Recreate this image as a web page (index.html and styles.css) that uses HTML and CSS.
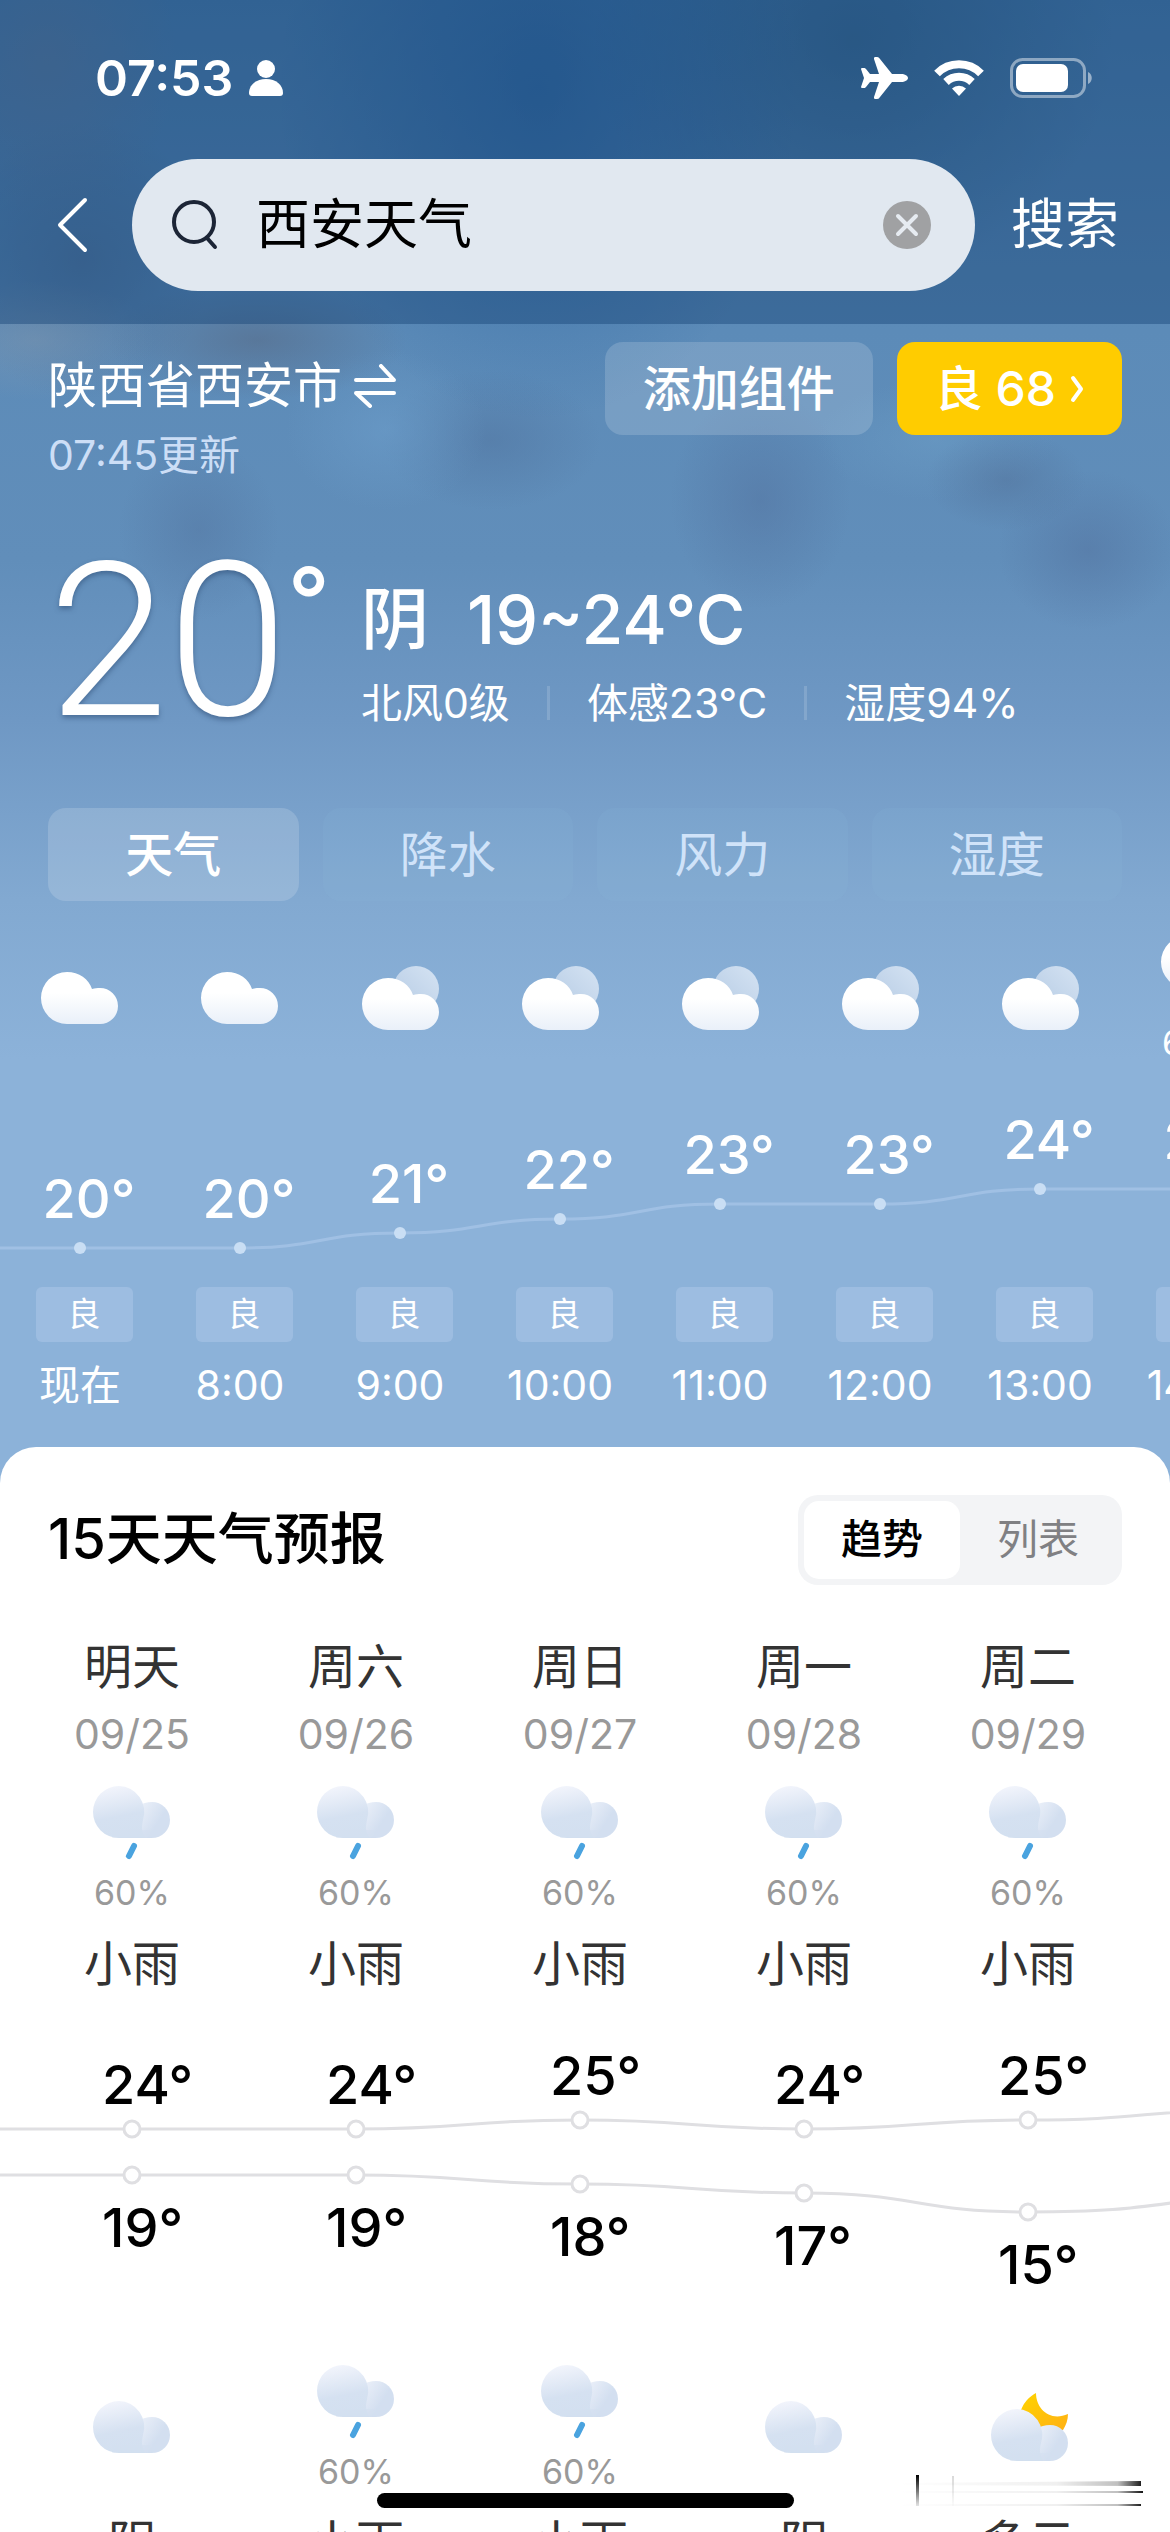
FILE: index.html
```html
<!DOCTYPE html>
<html lang="zh-CN">
<head>
    <meta charset="UTF-8">
    <meta name="viewport" content="width=device-width, initial-scale=1.0">
    <title>西安天气</title>
    <link rel="stylesheet" href="styles.css">
</head>
<body>

<!-- shared weather icons -->
<svg class="sprite" width="0" height="0" aria-hidden="true">
    <defs>
        <linearGradient id="whiteFill" x1="0" y1="0" x2="0" y2="1">
            <stop offset="0.4" stop-color="#ffffff"/>
            <stop offset="1" stop-color="#e9f0f9"/>
        </linearGradient>
        <linearGradient id="backFill" x1="1" y1="0" x2="0" y2="1">
            <stop offset="0" stop-color="#d5e3f3"/>
            <stop offset="1" stop-color="#b4cae3"/>
        </linearGradient>
        <linearGradient id="blueFill" x1="0.3" y1="0" x2="0.5" y2="1">
            <stop offset="0" stop-color="#f3f5fc"/>
            <stop offset="0.6" stop-color="#d5e1f1"/>
            <stop offset="1" stop-color="#d3e0f0"/>
        </linearGradient>
        <linearGradient id="lobeFill" x1="0" y1="0.2" x2="0.7" y2="0.6">
            <stop offset="0.2" stop-color="#ebf0f9"/>
            <stop offset="1" stop-color="#d3dff0"/>
        </linearGradient>
        <linearGradient id="moonFill" x1="0" y1="0" x2="1" y2="1">
            <stop offset="0" stop-color="#ffd400"/>
            <stop offset="1" stop-color="#ffb014"/>
        </linearGradient>
    </defs>
    <symbol id="cloudShape" viewBox="0 0 80 52">
        <path d="M27 0c12 0 22 7 25 17 3-1 5-1 8-1a18 18 0 0 1 0 36H27a26 26 0 0 1 0-52z" fill="url(#whiteFill)"/>
    </symbol>
    <symbol id="blueCloud" viewBox="0 0 80 52">
        <path d="M60 16a18 18 0 0 1 0 36H36V30c6-9 14-14 24-14z" fill="url(#lobeFill)"/>
        <path d="M27 0a26 26 0 0 1 24 34c-2 9-1 13 3 18H27a26 26 0 0 1 0-52z" fill="url(#blueFill)"/>
        <path d="M20 51.500h40V44H20z" fill="#d3e0f0" opacity="0.600"/>
    </symbol>
    <symbol id="overcast" viewBox="0 0 80 64">
        <use href="#cloudShape" y="6" width="80" height="52"/>
    </symbol>
    <symbol id="cloudy" viewBox="0 0 80 64">
        <circle cx="56" cy="23" r="23" fill="url(#backFill)"/>
        <use href="#cloudShape" x="1" y="12" width="80" height="52"/>
    </symbol>
    <symbol id="rainWhite" viewBox="0 0 80 74">
        <use href="#cloudShape" width="80" height="52"/>
        <path d="M42 60l-5 10" stroke="#fff" stroke-width="6" stroke-linecap="round"/>
    </symbol>
    <symbol id="rain" viewBox="0 0 80 74">
        <use href="#blueCloud" width="80" height="52"/>
        <path d="M42 60l-5 10" stroke="#4aa3df" stroke-width="6" stroke-linecap="round"/>
    </symbol>
    <symbol id="overcastBlue" viewBox="0 0 80 64">
        <use href="#blueCloud" y="6" width="80" height="52"/>
    </symbol>
    <symbol id="cloudyNight" viewBox="0 0 80 68">
        <path d="M48 0c0 16 14 29 32 21 0 6-2 11-5 16H50L33 17c3-8 8-13 15-17z" fill="url(#moonFill)"/>
        <use href="#blueCloud" x="2" y="16" width="80" height="52"/>
    </symbol>
</svg>

<main class="app">
    <section class="sky">
        <header class="top">
            <div class="status">
                <span class="clock">07:53</span>
                <svg width="34" height="38" viewBox="0 0 34 38" fill="#fff"><circle cx="17" cy="10" r="9"/><path d="M0 34c0-8 7-14 17-14s17 6 17 14c0 2-1 3-3 3H3c-2 0-3-1-3-3z"/></svg>
                <div class="status-right">
                    <svg width="47" height="42" viewBox="0 0 47 42" fill="#fff"><path d="M47 21c0 2-3 4-7 4h-9L19 40c-1 1-1 2-3 2h-2c-1 0-1-1-1-2l5-15h-9l-4 5c-1 1-1 1-2 1H1c-1 0-1-1-1-1l3-9L0 12s0-1 1-1h2c1 0 1 0 2 1l4 5h9L13 2c0-1 0-2 1-2h2c2 0 2 1 3 2l12 15h9c4 0 7 2 7 4z"/></svg>
                    <svg width="52" height="38" viewBox="0 0 52 38" fill="none"><path d="M4 14.500a31 31 0 0 1 44 0M13 23a19 19 0 0 1 26 0" stroke="#fff" stroke-width="8"/><path d="M26 37l-7-7.500a10 10 0 0 1 14 0z" fill="#fff"/></svg>
                    <svg width="84" height="40" viewBox="0 0 84 40" fill="none"><rect x="1.500" y="1.500" width="73" height="37" rx="11" stroke="#fff" stroke-opacity="0.450" stroke-width="3"/><rect x="6" y="6" width="52" height="28" rx="7" fill="#fff"/><path d="M78 14c5 2 5 10 0 12z" fill="#fff" fill-opacity="0.500"/></svg>
                </div>
            </div>
            <form class="search">
                <button type="button" class="back" aria-label="返回">
                    <svg width="32" height="56" viewBox="0 0 32 56" fill="none" stroke="#fff" stroke-width="4" stroke-linecap="round" stroke-linejoin="round"><path d="M29 3L4 28l25 25"/></svg>
                </button>
                <div class="search-box">
                    <svg width="46" height="50" viewBox="0 0 46 50" fill="none" stroke="#1c2536" stroke-width="4" stroke-linecap="round"><circle cx="22" cy="22" r="20"/><path d="M35 38l8 9"/></svg>
                    <input type="text" class="search-input" value="西安天气" aria-label="搜索内容">
                    <button type="button" class="clear" aria-label="清除">
                        <svg width="48" height="48" viewBox="0 0 48 48"><circle cx="24" cy="24" r="24" fill="#a0a1a3"/><path d="M15 15l18 18M33 15L15 33" stroke="#e6ebf1" stroke-width="4" stroke-linecap="round"/></svg>
                    </button>
                </div>
                <button type="submit" class="go">搜索</button>
            </form>
        </header>

        <div class="place">
            <div class="place-text">
                <div class="city">陕西省西安市
                    <svg width="42" height="44" viewBox="0 0 42 44" fill="none" stroke="#fff" stroke-width="4" stroke-linecap="round" stroke-linejoin="round"><path d="M2 16h38L27 2M40 29H2l14 13"/></svg>
                </div>
                <div class="updated">07:45更新</div>
            </div>
            <button type="button" class="chip">添加组件</button>
            <button type="button" class="chip air">良 68
                <svg width="14" height="28" viewBox="0 0 14 28" fill="none" stroke="#fff" stroke-width="4" stroke-linecap="round" stroke-linejoin="round"><path d="M3 3l8 11-8 11"/></svg>
            </button>
        </div>

        <div class="now">
            <div class="now-temp">20<span class="degree">°</span></div>
            <div class="now-detail">
                <div class="now-main"><span>阴</span><span>19~24°C</span></div>
                <div class="now-sub"><span>北风0级</span><i></i><span>体感23°C</span><i></i><span>湿度94%</span></div>
            </div>
        </div>

        <nav class="tabs">
            <button type="button" class="tab active">天气</button>
            <button type="button" class="tab">降水</button>
            <button type="button" class="tab">风力</button>
            <button type="button" class="tab">湿度</button>
        </nav>

        <div class="strip hours">
            <svg class="hour-line" width="1280" height="192" viewBox="0 0 1280 192" fill="none">
                <path d="M0 153H240C320 153 320 138 400 138S480 124 560 124S640 109 720 109H880C960 109 960 94 1040 94H1280" stroke="#a0c0e4" stroke-width="3"/>
                <g fill="#c9def4"><circle cx="80" cy="153" r="6"/><circle cx="240" cy="153" r="6"/><circle cx="400" cy="138" r="6"/><circle cx="560" cy="124" r="6"/><circle cx="720" cy="109" r="6"/><circle cx="880" cy="109" r="6"/><circle cx="1040" cy="94" r="6"/><circle cx="1200" cy="94" r="6"/></g>
            </svg>
            <div class="hour">
                <div class="hour-icon"><svg width="80" height="64"><use href="#overcast"/></svg></div>
                <div class="hour-chart"><div class="temp" style="margin-top: 74px">20°</div></div>
                <div class="aqi">良</div><div class="hour-time">现在</div>
            </div>
            <div class="hour">
                <div class="hour-icon"><svg width="80" height="64"><use href="#overcast"/></svg></div>
                <div class="hour-chart"><div class="temp" style="margin-top: 74px">20°</div></div>
                <div class="aqi">良</div><div class="hour-time">8:00</div>
            </div>
            <div class="hour">
                <div class="hour-icon"><svg width="80" height="64"><use href="#cloudy"/></svg></div>
                <div class="hour-chart"><div class="temp" style="margin-top: 59px">21°</div></div>
                <div class="aqi">良</div><div class="hour-time">9:00</div>
            </div>
            <div class="hour">
                <div class="hour-icon"><svg width="80" height="64"><use href="#cloudy"/></svg></div>
                <div class="hour-chart"><div class="temp" style="margin-top: 45px">22°</div></div>
                <div class="aqi">良</div><div class="hour-time">10:00</div>
            </div>
            <div class="hour">
                <div class="hour-icon"><svg width="80" height="64"><use href="#cloudy"/></svg></div>
                <div class="hour-chart"><div class="temp" style="margin-top: 30px">23°</div></div>
                <div class="aqi">良</div><div class="hour-time">11:00</div>
            </div>
            <div class="hour">
                <div class="hour-icon"><svg width="80" height="64"><use href="#cloudy"/></svg></div>
                <div class="hour-chart"><div class="temp" style="margin-top: 30px">23°</div></div>
                <div class="aqi">良</div><div class="hour-time">12:00</div>
            </div>
            <div class="hour">
                <div class="hour-icon"><svg width="80" height="64"><use href="#cloudy"/></svg></div>
                <div class="hour-chart"><div class="temp" style="margin-top: 15px">24°</div></div>
                <div class="aqi">良</div><div class="hour-time">13:00</div>
            </div>
            <div class="hour">
                <div class="hour-icon"><svg width="80" height="74"><use href="#rainWhite"/></svg><span class="chance">60%</span></div>
                <div class="hour-chart"><div class="temp" style="margin-top: 15px">24°</div></div>
                <div class="aqi">良</div><div class="hour-time">14:00</div>
            </div>
        </div>
    </section>

    <section class="forecast">
        <div class="forecast-head">
            <h2>15天天气预报</h2>
            <div class="switch">
                <button type="button" class="active">趋势</button>
                <button type="button">列表</button>
            </div>
        </div>

        <div class="strip days">
            <svg class="day-line" width="1260" height="347" viewBox="0 0 1260 347" fill="none" stroke="#dfdfe2" stroke-width="3">
                <path d="M0 138H356C468 138 468 129 580 129S692 138 804 138S916 129 1028 129S1140 120 1252 118"/>
                <path d="M0 184H356C468 184 468 193 580 193S692 202 804 202S916 221 1028 221S1140 214 1252 202"/>
                <g fill="#fff"><circle cx="132" cy="138" r="8"/><circle cx="356" cy="138" r="8"/><circle cx="580" cy="129" r="8"/><circle cx="804" cy="138" r="8"/><circle cx="1028" cy="129" r="8"/><circle cx="132" cy="184" r="8"/><circle cx="356" cy="184" r="8"/><circle cx="580" cy="193" r="8"/><circle cx="804" cy="202" r="8"/><circle cx="1028" cy="221" r="8"/></g>
            </svg>
            <div class="day">
                <div class="day-name">明天</div><div class="day-date">09/25</div>
                <div class="day-icon"><svg width="80" height="74"><use href="#rain"/></svg><span class="chance">60%</span></div>
                <div class="day-cond">小雨</div>
                <div class="day-chart"><div class="temp" style="margin-top: 64px">24°</div><div class="temp" style="margin-top: 83px">19°</div></div>
                <div class="day-icon"><svg width="80" height="64"><use href="#overcastBlue"/></svg></div>
                <div class="day-cond">阴</div>
            </div>
            <div class="day">
                <div class="day-name">周六</div><div class="day-date">09/26</div>
                <div class="day-icon"><svg width="80" height="74"><use href="#rain"/></svg><span class="chance">60%</span></div>
                <div class="day-cond">小雨</div>
                <div class="day-chart"><div class="temp" style="margin-top: 64px">24°</div><div class="temp" style="margin-top: 83px">19°</div></div>
                <div class="day-icon"><svg width="80" height="74"><use href="#rain"/></svg><span class="chance">60%</span></div>
                <div class="day-cond">小雨</div>
            </div>
            <div class="day">
                <div class="day-name">周日</div><div class="day-date">09/27</div>
                <div class="day-icon"><svg width="80" height="74"><use href="#rain"/></svg><span class="chance">60%</span></div>
                <div class="day-cond">小雨</div>
                <div class="day-chart"><div class="temp" style="margin-top: 55px">25°</div><div class="temp" style="margin-top: 101px">18°</div></div>
                <div class="day-icon"><svg width="80" height="74"><use href="#rain"/></svg><span class="chance">60%</span></div>
                <div class="day-cond">小雨</div>
            </div>
            <div class="day">
                <div class="day-name">周一</div><div class="day-date">09/28</div>
                <div class="day-icon"><svg width="80" height="74"><use href="#rain"/></svg><span class="chance">60%</span></div>
                <div class="day-cond">小雨</div>
                <div class="day-chart"><div class="temp" style="margin-top: 64px">24°</div><div class="temp" style="margin-top: 101px">17°</div></div>
                <div class="day-icon"><svg width="80" height="64"><use href="#overcastBlue"/></svg></div>
                <div class="day-cond">阴</div>
            </div>
            <div class="day">
                <div class="day-name">周二</div><div class="day-date">09/29</div>
                <div class="day-icon"><svg width="80" height="74"><use href="#rain"/></svg><span class="chance">60%</span></div>
                <div class="day-cond">小雨</div>
                <div class="day-chart"><div class="temp" style="margin-top: 55px">25°</div><div class="temp" style="margin-top: 129px">15°</div></div>
                <div class="day-icon"><svg width="80" height="68"><use href="#cloudyNight"/></svg></div>
                <div class="day-cond">多云</div>
            </div>
        </div>
    </section>

    <!-- faint streaks in the corner -->
    <svg class="streaks" width="246" height="36" viewBox="0 0 246 36" aria-hidden="true">
        <defs>
            <linearGradient id="streak" gradientUnits="userSpaceOnUse" x1="0" y1="0" x2="244" y2="0">
                <stop offset="0" stop-color="#000" stop-opacity="0"/>
                <stop offset="0.650" stop-color="#000" stop-opacity="0.060"/>
                <stop offset="0.900" stop-color="#000" stop-opacity="0.250"/>
                <stop offset="1" stop-color="#000" stop-opacity="0.900"/>
            </linearGradient>
            <linearGradient id="drip" x1="0" y1="0" x2="0" y2="1">
                <stop offset="0" stop-color="#000"/>
                <stop offset="1" stop-color="#000" stop-opacity="0.100"/>
            </linearGradient>
        </defs>
        <path d="M0 9l243-2v5L0 11zM0 17h245v2H0zM0 30h243v2H0z" fill="url(#streak)"/>
        <path d="M18 1h3v31h-3z" fill="url(#drip)"/>
        <path d="M54 2h2v30h-2z" fill="url(#drip)" opacity="0.150"/>
    </svg>
    <div class="home-bar"></div>
</main>

</body>
</html>
```
FILE: styles.css
```css
* {
    box-sizing: border-box;
}

body {
    margin: 0;
    background-color: #fff;
    color: #000;
    font-family: Inter, "Noto Sans CJK SC", sans-serif;
    line-height: 1.2;
}

button, input {
    margin: 0;
    padding: 0;
    border: none;
    background: none;
    color: inherit;
    font-family: inherit;
    line-height: inherit;
}

svg {
    display: block;
    flex: none;
}

.sprite {
    position: absolute;
}

.app {
    position: relative;
    height: 100vh;
    overflow: hidden;
}

/* dark and light patches of haze over the blue */
.sky {
    padding-bottom: 73px;
    color: #fff;
    background:
        radial-gradient(ellipse 150px 60px at 22% 340px, rgba(85, 100, 125, 0.5), transparent),
        radial-gradient(ellipse 120px 60px at 3% 340px, rgba(135, 155, 175, 0.4), transparent),
        radial-gradient(ellipse 130px 160px at 4% 60px, rgba(115, 120, 140, 0.35), transparent),
        radial-gradient(ellipse 130px 140px at 7% 260px, rgba(70, 95, 130, 0.4), transparent),
        radial-gradient(ellipse 260px 330px at 46% 90px, rgba(25, 85, 150, 0.5), transparent),
        radial-gradient(ellipse 260px 240px at 73% 40px, rgba(40, 85, 120, 0.5), transparent),
        radial-gradient(ellipse 100px 80px at 33% 430px, rgba(110, 160, 205, 0.5), transparent),
        radial-gradient(ellipse 110px 70px at 42% 440px, rgba(78, 112, 155, 0.45), transparent),
        radial-gradient(ellipse 80px 90px at 17% 530px, rgba(80, 112, 155, 0.4), transparent),
        radial-gradient(ellipse 90px 110px at 65% 500px, rgba(80, 110, 155, 0.45), transparent),
        radial-gradient(ellipse 80px 50px at 86% 480px, rgba(80, 110, 150, 0.45), transparent),
        radial-gradient(ellipse 90px 80px at 93% 550px, rgba(80, 110, 155, 0.45), transparent),
        radial-gradient(ellipse 120px 60px at 80% 440px, rgba(110, 160, 200, 0.45), transparent),
        linear-gradient(#487bab 0, #5c8bb8 330px, #618eba 560px, #6f98c4 720px, #82a9d1 900px, #8cb2d9 1060px);
}

.top {
    padding-bottom: 33px;
    background-color: rgba(18, 64, 114, 0.42);
}

.status {
    display: flex;
    align-items: center;
    gap: 16px;
    height: 159px;
    padding: 0 76px 4px 95px;
}

.clock {
    font-size: 50px;
    font-weight: 600;
}

.status-right {
    display: flex;
    align-items: center;
    gap: 25px;
    margin-left: auto;
}

.search {
    display: flex;
    align-items: center;
    padding: 0 51px 0 56px;
}

.back {
    margin-right: 44px;
}

.search-box {
    display: flex;
    align-items: center;
    flex: 1;
    min-width: 0;
    height: 132px;
    padding: 0 44px 0 40px;
    border-radius: 66px;
    background-color: #e1e8f0;
}

.search-input {
    flex: 1;
    min-width: 0;
    margin-left: 38px;
    color: #000;
    font-size: 54px;
    outline: none;
}

.go {
    margin-left: 36px;
    font-size: 54px;
}

.place {
    display: flex;
    align-items: flex-start;
    gap: 24px;
    padding: 18px 48px 0;
}

.place-text {
    flex: 1;
    padding-top: 16px;
}

.city {
    display: flex;
    align-items: center;
    gap: 12px;
    font-size: 49px;
    line-height: 56px;
}

.updated {
    margin-top: 16px;
    color: #ccdef6;
    font-size: 41px;
    line-height: 50px;
}

.chip {
    display: flex;
    align-items: center;
    justify-content: center;
    height: 93px;
    padding: 0 38px;
    border-radius: 18px;
    background-color: rgba(255, 255, 255, 0.16);
    font-size: 48px;
    font-weight: 500;
}

.air {
    gap: 14px;
    background-color: #ffcc00;
}

.now {
    display: flex;
    align-items: flex-start;
    margin-top: 80px;
    padding: 0 48px;
}

.now-temp {
    display: flex;
    width: 313px;
    font-family: Roboto, Inter, sans-serif;
    font-size: 216px;
    font-weight: 300;
    line-height: 164px;
    text-shadow: 0 3px 5px rgba(40, 70, 110, 0.5);
}

.degree {
    font-family: Inter, sans-serif;
    font-size: 92px;
    font-weight: 500;
    line-height: 80px;
    text-shadow: none;
}

.now-detail {
    padding-top: 25px;
}

.now-main {
    display: flex;
    gap: 38px;
    font-size: 68px;
    font-weight: 500;
    line-height: 68px;
}

.now-sub {
    display: flex;
    align-items: center;
    gap: 37px;
    margin-top: 27px;
    font-size: 41px;
    line-height: 46px;
}

.now-sub i {
    width: 3px;
    height: 34px;
    background-color: rgba(255, 255, 255, 0.15);
}

.tabs {
    display: flex;
    gap: 24px;
    margin-top: 82px;
    padding: 0 48px;
}

.tab {
    flex: 1;
    height: 93px;
    border-radius: 18px;
    background-color: rgba(150, 200, 230, 0.1);
    color: #d0e3f9;
    font-size: 48px;
}

.tab.active {
    background-color: rgba(255, 255, 255, 0.16);
    color: #fff;
    font-weight: 500;
}

.strip {
    position: relative;
    display: flex;
    overflow: hidden;
}

/* temperature curves run behind the columns */
.hour-line {
    position: absolute;
    top: 194px;
    left: 0;
}

.hour {
    position: relative;
    display: flex;
    flex: 0 0 160px;
    flex-direction: column;
    align-items: center;
}

.hour-icon, .day-icon {
    display: flex;
    flex-direction: column;
    align-items: center;
    justify-content: center;
    height: 194px;
}

.chance {
    margin-top: 16px;
    font-size: 34px;
    line-height: 34px;
}

.temp {
    font-size: 54px;
    font-weight: 500;
    line-height: 60px;
}

.hour-chart {
    height: 192px;
    padding-left: 18px;
    overflow: hidden;
}

.aqi {
    width: 97px;
    margin-left: 8px;
    border-radius: 6px;
    background-color: #9dbde1;
    font-size: 33px;
    line-height: 55px;
    text-align: center;
}

.hour-time {
    margin-top: 18px;
    font-size: 41px;
    line-height: 50px;
}

.forecast {
    position: relative;
    margin-top: -36px;
    padding-top: 48px;
    border-radius: 36px 36px 0 0;
    background-color: #fff;
}

.forecast-head {
    display: flex;
    align-items: center;
    justify-content: space-between;
    padding: 0 48px;
}

h2 {
    margin: 0;
    font-size: 56px;
    font-weight: 500;
}

.switch {
    display: flex;
    width: 324px;
    height: 90px;
    padding: 6px;
    border-radius: 20px;
    background-color: #f3f4f6;
}

.switch button {
    flex: 1;
    border-radius: 15px;
    color: #808083;
    font-size: 41px;
}

.switch .active {
    background-color: #fff;
    color: #000;
    font-weight: 500;
}

.days {
    margin-top: 52px;
    padding-left: 20px;
}

.day-line {
    position: absolute;
    top: 354px;
    left: 0;
}

.day {
    position: relative;
    flex: 0 0 224px;
    text-align: center;
}

.day-name {
    color: #333;
    font-size: 48px;
    line-height: 60px;
}

.day-date {
    margin-top: 12px;
    color: #999;
    font-size: 41px;
    line-height: 50px;
}

.day-icon {
    height: 178px;
}

.day-icon .chance {
    color: #999;
}

.day-cond {
    color: #333;
    font-size: 48px;
    line-height: 54px;
}

.day-chart {
    height: 347px;
    padding-left: 82px;
    overflow: hidden;
    text-align: left;
}

.streaks {
    position: absolute;
    right: 26px;
    bottom: 22px;
}

.home-bar {
    position: absolute;
    bottom: 24px;
    left: 50%;
    width: 417px;
    height: 15px;
    margin-left: -208px;
    border-radius: 8px;
    background-color: #000;
}
```
